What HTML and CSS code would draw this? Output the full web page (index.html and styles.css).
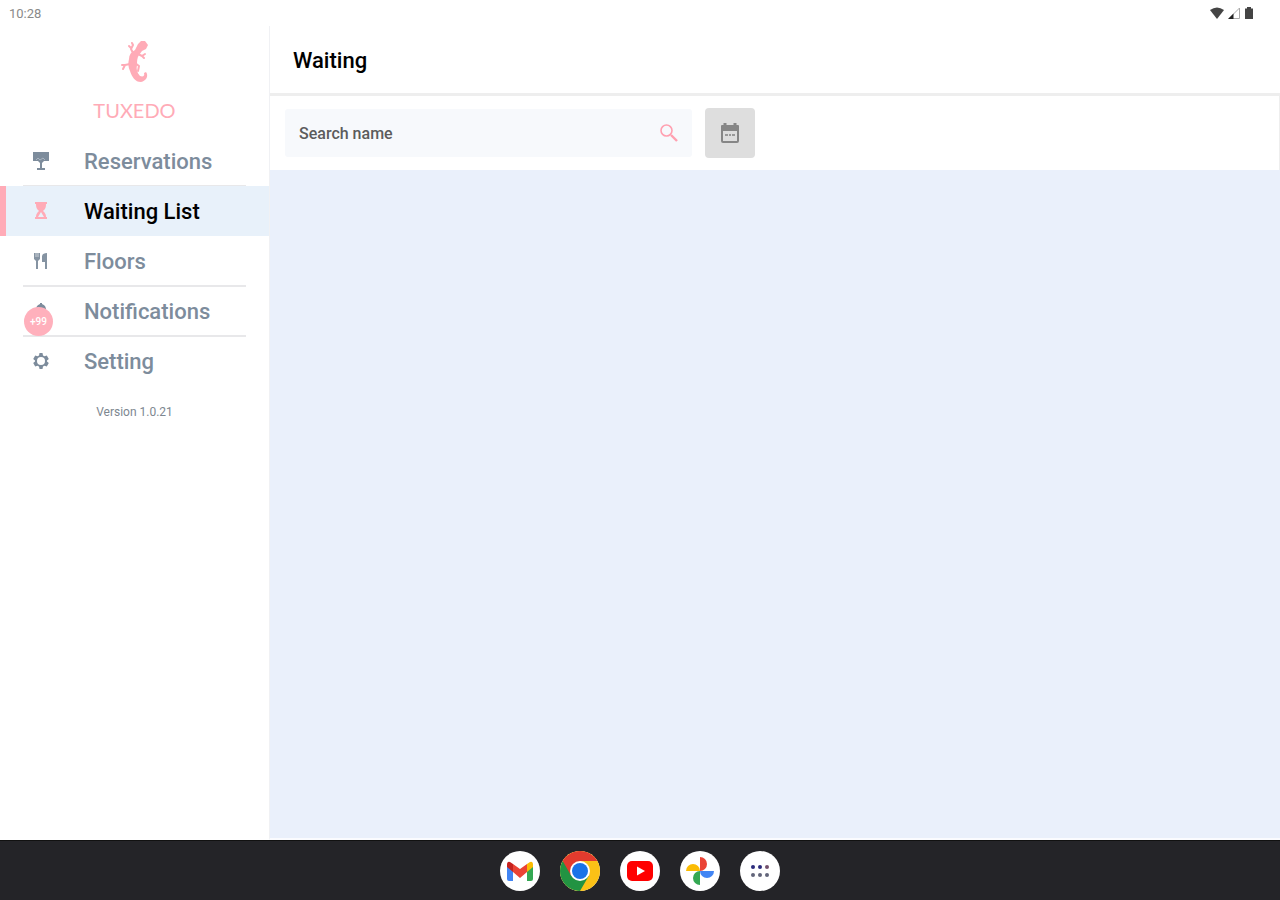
FILE: index.html
```html
<!DOCTYPE html>
<html lang="en">
	<head>
		<meta charset="UTF-8">
		<title>Waiting</title>
		<link rel="stylesheet" href="styles.css">
	</head>
	<body>
		<div class="status">
			<span>10:28</span>
			<div class="status-icons">
				<svg width="14" height="12" viewBox="0 0 14 12"><path d="M0 3Q7-2 14 3L7 12z" fill="#444"/></svg>
				<svg width="12" height="12" viewBox="0 0 12 12"><path d="M1 11.5L11.5 1v10.5z" fill="none" stroke="#aaa"/><path d="M0 12L5.500 6.500V12z" fill="#222"/></svg>
				<svg width="10" height="12" viewBox="0 0 10 12"><path d="M3 0h4v1.500h2V12H1V1.500h2z" fill="#444"/></svg>
			</div>
		</div>
		<div class="content">
			<aside class="side">
				<div class="logo">
					<svg width="28" height="44" viewBox="0 0 28 44">
						<path d="M17 4L20 1L24 1L27 5L25 9L21 11L18 15C16 18 16 21 16 25C15 29 16 33 19 36C22 37 24 36 23 33L25 32C28 36 25 41 20 42C14 42 11 37 9 31C7 27 7 23 8 19C8 15 10 12 14 10z" fill="#ffabb7"/>
						<g fill="none" stroke="#ffabb7" stroke-linecap="round" stroke-linejoin="round" stroke-width="2">
							<path d="M12 13L10 9L12 5M10 8L8 6M12 5L11 3"/>
							<path d="M17 14L21 16L24 14M21 16L23 18"/>
							<path d="M9 24L4 25L2 29M4 25L1 25"/>
							<path d="M14 23L18 26L17 31"/>
						</g>
					</svg>
					<span class="brand">TUXEDO</span>
				</div>
				<nav class="menu">
					<a href="#" class="item line">
						<svg width="18" height="18" viewBox="0 0 18 18" fill="#7d8c9c"><path d="M1 0h16v9h-5l-2 2v5h3v2H5v-2h3v-5L6 9H1z"/><path d="M4 8l2-2 2 2 3-2 2 2" fill="none" stroke="#a9b4bf"/></svg>
						<span>Reservations</span>
					</a>
					<a href="#" class="item active">
						<svg width="18" height="18" viewBox="0 0 18 18" fill="#ffabb7"><path d="M3 0h12v2h-1c0 4-1 5-3 7c2 2 3 3 3 6h1v2H3v-2h1c0-3 1-4 3-6C5 7 4 6 4 2H3z"/><path d="M9 10l3 5H6z" fill="#e8f1fa"/></svg>
						<span>Waiting List</span>
					</a>
					<a href="#" class="item line">
						<svg width="18" height="18" viewBox="0 0 18 18" fill="#8593a2"><path d="M2 1h6v6L6 9v8H4V9L2 7zM10 5c0-3 2-4 5-4v16h-2v-7h-3z"/><path d="M4 1v4M6 1v4" stroke="#cdd3d9"/></svg>
						<span>Floors</span>
					</a>
					<a href="#" class="item line">
						<span class="bell">
							<svg width="18" height="18" viewBox="0 0 18 18" fill="#7d8c9c"><path d="M8 1h2v1c3 1 4 3 4 6v4l2 2H2l2-2V8c0-3 1-5 4-6zM7 15h4l-2 2z"/></svg>
							<span class="badge">+99</span>
						</span>
						<span>Notifications</span>
					</a>
					<a href="#" class="item">
						<svg width="18" height="18" viewBox="0 0 18 18"><path d="M7.500 1h3l.5 2.500 1.500.8 2.300-.8 2 3.400L15 8.500v1l1.800 1.600-2 3.400-2.300-.8-1.500.8-.5 2.500h-3L7 14.500l-1.500-.8-2.300.8-2-3.400L3 9.500v-1L1.200 6.900l2-3.400 2.300.8L7 3.500zM9 5a4 4 0 1 0 0 8a4 4 0 1 0 0-8z" fill="#7d8c9c" fill-rule="evenodd"/></svg>
						<span>Setting</span>
					</a>
				</nav>
				<p class="version">Version 1.0.21</p>
			</aside>
			<main class="main">
				<h1 class="title">Waiting</h1>
				<div class="tools">
					<div class="search">
						<input type="text" placeholder="Search name" aria-label="Search name">
						<button type="button" class="find" aria-label="Search">
							<svg width="18" height="18" viewBox="0 0 18 18" fill="none" stroke="#ffa0b0"><circle cx="6.500" cy="6.500" r="5.500" stroke-width="1.600"/><path d="M11 11l6 6" stroke-width="2.400"/></svg>
						</button>
					</div>
					<button type="button" class="date" aria-label="Choose date">
						<svg width="20" height="22" viewBox="0 0 20 22"><path d="M2 3h16q1 0 1 1v15q0 2-2 2H3q-2 0-2-2V4q0-1 1-1zM3 9v10h14V9z" fill="#868686" fill-rule="evenodd"/><path d="M5 1v4M15 1v4" stroke="#868686" stroke-width="3"/><path d="M5 13h3M9 13h2M12 13h3" stroke="#999" stroke-width="2"/></svg>
					</button>
				</div>
			</main>
		</div>
		<footer class="dock">
			<a href="#" class="app" aria-label="Gmail">
				<svg width="40" height="40" viewBox="0 0 40 40"><path d="M7 14l6 4v12H9q-2 0-2-2z" fill="#4285f4"/><path d="M33 14l-6 4v12h4q2 0 2-2z" fill="#34a853"/><path d="M27 13l3-2q3-1 3 3v2l-6 5z" fill="#fbbc04"/><path d="M13 13l7 5 7-5v8l-7 6-7-6z" fill="#ea4335"/><path d="M7 16v-2q0-4 3-3l3 2v8z" fill="#c5221f"/></svg>
			</a>
			<a href="#" class="app" aria-label="Chrome">
				<svg width="40" height="40" viewBox="0 0 40 40">
					<circle cx="20" cy="20" r="20" fill="#fbc116"/>
					<path d="M2.700 10A20 20 0 0 0 20 40L28.700 25L20 20z" fill="#229342"/>
					<path d="M2.700 10A20 20 0 0 1 37.300 10H20V20L11.300 25z" fill="#e33b2e"/>
					<circle cx="20" cy="20" r="10" fill="#fff"/>
					<circle cx="20" cy="20" r="8" fill="#1a73e8"/>
				</svg>
			</a>
			<a href="#" class="app" aria-label="YouTube">
				<svg width="40" height="40" viewBox="0 0 40 40"><rect x="7" y="10" width="26" height="20" rx="5" fill="#f00"/><path d="M17 15.500l8 4.500-8 4.500z" fill="#fff"/></svg>
			</a>
			<a href="#" class="app" aria-label="Photos">
				<svg width="40" height="40" viewBox="0 0 40 40"><path d="M20 6a7 7 0 0 1 0 14z" fill="#ea4335"/><path d="M34 20a7 7 0 0 1-14 0z" fill="#4285f4"/><path d="M20 34a7 7 0 0 1 0-14z" fill="#34a853"/><path d="M6 20a7 7 0 0 1 14 0z" fill="#fbbc04"/></svg>
			</a>
			<a href="#" class="app" aria-label="All apps">
				<svg width="40" height="40" viewBox="0 0 40 40"><g fill="#2c2c7c"><circle cx="13" cy="16" r="2"/><circle cx="20" cy="16" r="2"/></g><circle cx="27" cy="16" r="2" fill="#73506c"/><g fill="#62657a"><circle cx="13" cy="24" r="2"/><circle cx="20" cy="24" r="2"/><circle cx="27" cy="24" r="2"/></g></svg>
			</a>
		</footer>
	</body>
</html>
```
FILE: styles.css
```css
*{margin:0;padding:0;box-sizing:border-box;}
body{
	min-height:100vh;
	display:flex;
	flex-direction:column;
	font-family:Roboto,"Liberation Sans",sans-serif;
	background:#fff;
}
a{
	color:inherit;
	text-decoration:none;
}
button{
	border:0;
	background:none;
	cursor:pointer;
}
svg{
	display:block;
	flex:none;
}
.status{
	display:flex;
	justify-content:space-between;
	align-items:center;
	height:26px;
	padding:0 26px 0 9px;
	font-size:13px;
	color:#8a8a8a;
}
.status-icons{
	display:flex;
	gap:4px;
}
.content{
	flex:1;
	display:flex;
}
.side{
	width:269px;
	flex:none;
}
.logo{
	display:flex;
	flex-direction:column;
	align-items:center;
	height:110px;
	padding-top:14px;
	gap:14px;
}
.brand{
	font-family:Lato,"Liberation Sans",sans-serif;
	font-size:20px;
	line-height:24px;
	color:#ffabb7;
}
.item{
	position:relative;
	display:flex;
	align-items:center;
	gap:34px;
	height:50px;
	padding-left:32px;
	font-size:22px;
	font-weight:500;
	color:#7d8c9c;
}
.line:after{
	content:"";
	position:absolute;
	left:23px;
	right:23px;
	bottom:-1px;
	height:2px;
	background:#e8e8ea;
}
.active{
	background:#e8f1fa;
	border-left:6px solid #ffabb7;
	padding-left:26px;
	color:#000;
}
.bell{
	position:relative;
}
.badge{
	position:absolute;
	z-index:1;
	left:-8px;
	top:5px;
	width:29px;
	height:29px;
	border-radius:50%;
	background:#ffb0bc;
	color:#fff;
	font-size:10px;
	font-weight:500;
	line-height:29px;
	text-align:center;
}
.version{
	padding-top:17px;
	font-size:12px;
	line-height:18px;
	text-align:center;
	color:#7d8790;
}
.main{
	flex:1;
	background:#eaf0fb;
	border-left:1px solid #f0f1f4;
	border-bottom:2px solid #fafbfe;
}
.title{
	height:70px;
	padding-left:23px;
	border-bottom:3px solid #eee;
	background:#fff;
	font-size:22px;
	font-weight:500;
	line-height:70px;
	color:#000;
}
.tools{
	display:flex;
	align-items:center;
	gap:13px;
	height:74px;
	padding-left:15px;
	background:#fff;
	border-right:1px solid #eee;
}
.search{
	display:flex;
	align-items:center;
	max-width:407px;
	min-width:200px;
	flex:1;
	height:48px;
	padding:0 14px;
	background:#f7f9fc;
	border-radius:3px;
}
.search input{
	flex:1;
	min-width:0;
	border:0;
	outline:0;
	background:none;
	font-family:inherit;
	font-size:16px;
	font-weight:500;
	color:#555;
}
.search input::placeholder{
	color:#5c5c5c;
}
.date{
	display:flex;
	align-items:center;
	justify-content:center;
	width:50px;
	height:50px;
	border-radius:4px;
	background:#dedede;
}
.dock{
	display:flex;
	align-items:center;
	justify-content:center;
	gap:20px;
	height:60px;
	background:#242428;
	border-top:1px solid #111;
}
.app{
	width:40px;
	height:40px;
	border-radius:50%;
	background:#fff;
}
```
